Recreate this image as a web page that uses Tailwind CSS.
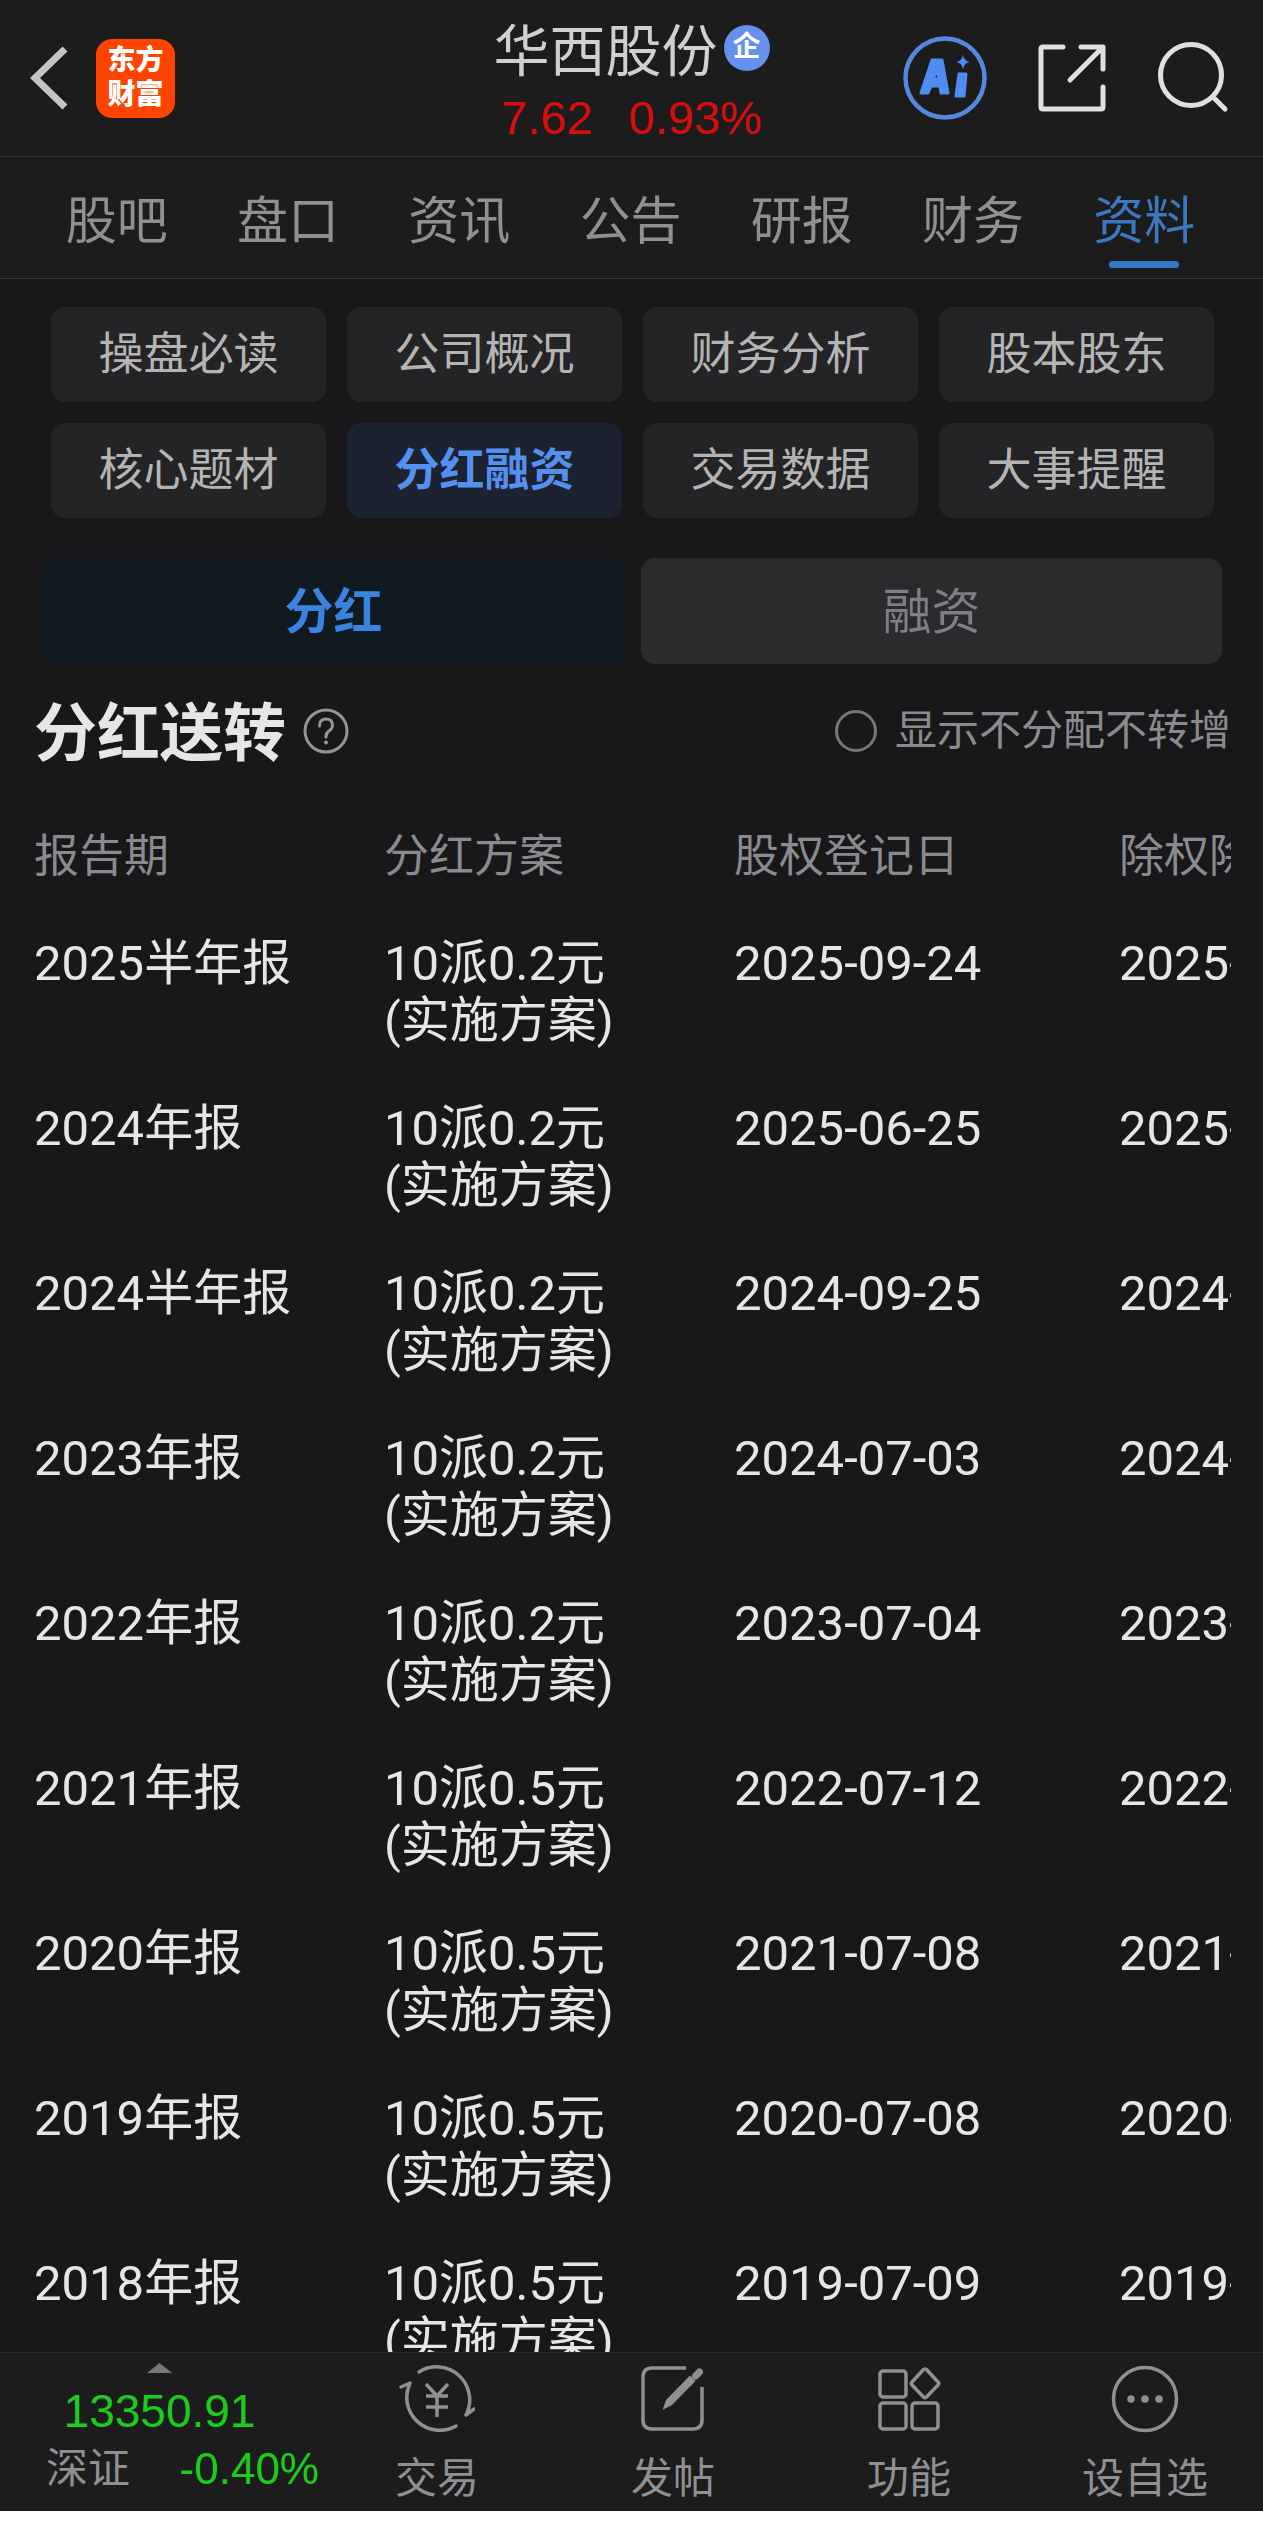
<!DOCTYPE html>
<html lang="zh-CN">

<head>
  <meta charset="UTF-8">
  <meta name="viewport" content="width=device-width, initial-scale=1.0">
  <title>华西股份 - 分红融资</title>
  <script src="https://cdn.jsdelivr.net/npm/@tailwindcss/browser@4"></script>
</head>

<body class="bg-white h-screen flex flex-col pb-[15px] font-[Roboto,'Noto_Sans_CJK_SC',sans-serif]">
  <!-- Header -->
  <header class="shrink-0 h-[157px] grid grid-cols-[1fr_auto_1fr] items-center bg-[#1c1c1c] border-b border-[#333335]">
    <div class="flex items-center pl-[30px] gap-7">
      <button type="button" aria-label="返回">
        <svg class="w-[38px] h-[64px]" viewBox="0 0 38 64" fill="none" stroke="#c4c4c4" stroke-width="7">
          <path d="M35 3 L5 32 L35 61" />
        </svg>
      </button>
      <a href="#" class="w-[79px] h-[79px] rounded-[16px] bg-[#ff4400] flex items-center justify-center text-center text-white text-[28px] leading-[34px] font-black">东方<br>财富</a>
    </div>

    <div class="flex flex-col items-center pt-3">
      <div class="flex items-center gap-[6px]">
        <h1 class="text-[56px] leading-[68px] text-[#d0d0d0]">华西股份</h1>
        <span class="w-[46px] h-[46px] mb-2 rounded-full bg-[#6590ee] text-white text-[28px] leading-[44px] font-bold text-center">企</span>
      </div>
      <p class="flex gap-[36px] font-['Liberation_Sans',sans-serif] text-[47px] leading-[64px] text-[#d80e0e]">
        <span>7.62</span>
        <span>0.93%</span>
      </p>
    </div>

    <div class="flex items-center justify-end pr-[34px] gap-[50px]">
      <button type="button" aria-label="AI">
        <svg class="w-[84px] h-[84px]" viewBox="0 0 84 84">
          <circle cx="42" cy="42" r="39.500" fill="none" stroke="#5688de" stroke-width="4.500" />
          <path fill="#4f8df0" stroke="#4f8df0" stroke-width="3" stroke-linejoin="round" fill-rule="evenodd" d="M29 24h10l6 33h-7l-1-7h-9l-3 7h-7zM34 34l-4 9h6z" />
          <path fill="#4f8df0" stroke="#4f8df0" stroke-width="3" stroke-linejoin="round" d="M56 38h7l-2 22h-8z" />
          <path fill="#4f8df0" d="M60 19q1 6 7 7q-6 1-7 7q-1-6-7-7q6-1 7-7z" />
        </svg>
      </button>
      <button type="button" aria-label="分享">
        <svg class="w-[70px] h-[70px]" viewBox="0 0 70 70" fill="none" stroke="#e0e0e0" stroke-width="5" stroke-linecap="round" stroke-linejoin="round">
          <path d="M26 4H6q-2 0-2 2V64q0 2 2 2H64q2 0 2-2V44" />
          <path d="M44 4H66V26M65 5L33 37" />
        </svg>
      </button>
      <button type="button" aria-label="搜索">
        <svg class="w-[72px] h-[72px]" viewBox="0 0 72 72" fill="none" stroke="#e0e0e0" stroke-width="5" stroke-linecap="round">
          <circle cx="34" cy="33" r="30.500" />
          <path d="M56 55L68 67" />
        </svg>
      </button>
    </div>
  </header>

  <!-- Tabs -->
  <nav class="shrink-0 h-[122px] pl-[31px] pr-[33px] grid grid-cols-7 bg-[#1c1c1c] border-b border-[#333335] text-[51px] leading-[60px] text-center text-[#8f8f94]">
    <a href="#" class="pt-[35px]">股吧</a>
    <a href="#" class="pt-[35px]">盘口</a>
    <a href="#" class="pt-[35px]">资讯</a>
    <a href="#" class="pt-[35px]">公告</a>
    <a href="#" class="pt-[35px]">研报</a>
    <a href="#" class="pt-[35px]">财务</a>
    <a href="#" class="pt-[35px] flex flex-col items-center gap-[9px] text-[#3a78c0]" aria-current="page">
      资料
      <span class="w-[70px] h-[7px] rounded-full bg-[#3478c4]"></span>
    </a>
  </nav>

  <main class="flex-1 min-h-0 overflow-hidden bg-[#18181a]">
    <!-- Sections -->
    <div class="grid grid-cols-4 gap-[21px] pt-7 pl-[51px] pr-[49px] text-[45px] leading-[60px] text-[#b4b4b4]">
      <button type="button" class="h-[95px] rounded-[14px] bg-[#242426]">操盘必读</button>
      <button type="button" class="h-[95px] rounded-[14px] bg-[#242426]">公司概况</button>
      <button type="button" class="h-[95px] rounded-[14px] bg-[#242426]">财务分析</button>
      <button type="button" class="h-[95px] rounded-[14px] bg-[#242426]">股本股东</button>
      <button type="button" class="h-[95px] rounded-[14px] bg-[#242426]">核心题材</button>
      <button type="button" class="h-[95px] rounded-[14px] bg-[#1c2230] text-[#5590f0] font-bold">分红融资</button>
      <button type="button" class="h-[95px] rounded-[14px] bg-[#242426]">交易数据</button>
      <button type="button" class="h-[95px] rounded-[14px] bg-[#242426]">大事提醒</button>
    </div>

    <div class="grid grid-cols-2 gap-[17px] pt-10 pl-[43px] pr-[41px] text-[49px] leading-[60px]">
      <button type="button" class="h-[106px] pt-1 rounded-[14px] bg-[#111921] text-[#3a84e0] font-bold">分红</button>
      <button type="button" class="h-[106px] pt-1 rounded-[14px] bg-[#2b2b2d] text-[#7e7e86]">融资</button>
    </div>

    <!-- Title row -->
    <div class="flex items-center justify-between h-[134px] pl-[34px] pr-8">
      <div class="flex items-center gap-[17px]">
        <h2 class="pt-[6px] text-[63px] leading-[76px] font-bold text-[#e6e6e6]">分红送转</h2>
        <button type="button" aria-label="说明">
          <svg class="w-[46px] h-[46px]" viewBox="0 0 46 46" fill="none" stroke="#949494" stroke-width="3" stroke-linecap="round">
            <circle cx="23" cy="23" r="21" />
            <path d="M16.500 18q0-7 6.500-7t6.500 6.500q0 3-3.500 5.500t-3 6" />
            <circle cx="23" cy="34.500" r="1" fill="#949494" stroke-width="2" />
          </svg>
        </button>
      </div>
      <label class="flex items-center gap-[18px] text-[42px] leading-[56px] text-[#8b8b8f]">
        <input type="radio" name="showAll" class="appearance-none w-[42px] h-[42px] rounded-full border-3 border-[#77777a]">
        显示不分配不转增
      </label>
    </div>

    <!-- Dividend table, scrolls sideways -->
    <div class="ml-[34px] mr-8 overflow-hidden">
      <table class="table-fixed w-[1400px] text-left text-[49px] leading-[57px] text-[#e6e6e6] whitespace-nowrap [&_td]:align-top [&_td]:pt-[25px] [&_td]:pb-[26px]">
        <thead class="text-[45px] text-[#8b8b8f]">
          <tr class="h-[112px]">
            <th class="w-[350px] pt-1 font-normal">报告期</th>
            <th class="w-[350px] pt-1 font-normal">分红方案</th>
            <th class="w-[385px] pt-1 font-normal">股权登记日</th>
            <th class="pt-1 font-normal">除权除息日</th>
          </tr>
        </thead>
        <tbody>
          <tr>
            <td>2025半年报</td>
            <td>10派0.2元<br>(实施方案)</td>
            <td>2025-09-24</td>
            <td>2025-</td>
          </tr>
          <tr>
            <td>2024年报</td>
            <td>10派0.2元<br>(实施方案)</td>
            <td>2025-06-25</td>
            <td>2025-</td>
          </tr>
          <tr>
            <td>2024半年报</td>
            <td>10派0.2元<br>(实施方案)</td>
            <td>2024-09-25</td>
            <td>2024-</td>
          </tr>
          <tr>
            <td>2023年报</td>
            <td>10派0.2元<br>(实施方案)</td>
            <td>2024-07-03</td>
            <td>2024-</td>
          </tr>
          <tr>
            <td>2022年报</td>
            <td>10派0.2元<br>(实施方案)</td>
            <td>2023-07-04</td>
            <td>2023-</td>
          </tr>
          <tr>
            <td>2021年报</td>
            <td>10派0.5元<br>(实施方案)</td>
            <td>2022-07-12</td>
            <td>2022-</td>
          </tr>
          <tr>
            <td>2020年报</td>
            <td>10派0.5元<br>(实施方案)</td>
            <td>2021-07-08</td>
            <td>2021-</td>
          </tr>
          <tr>
            <td>2019年报</td>
            <td>10派0.5元<br>(实施方案)</td>
            <td>2020-07-08</td>
            <td>2020-</td>
          </tr>
          <tr>
            <td>2018年报</td>
            <td>10派0.5元<br>(实施方案)</td>
            <td>2019-07-09</td>
            <td>2019-</td>
          </tr>
        </tbody>
      </table>
    </div>
  </main>

  <!-- Bottom bar -->
  <footer class="shrink-0 h-[159px] grid grid-cols-[319px_repeat(4,1fr)] bg-[#1c1c1c] border-t border-[#2a2a2c] text-[42px] leading-[56px] text-[#8f8f94]">
    <a href="#" class="flex flex-col items-center pt-[10px]">
      <svg class="w-[25px] h-[10px]" viewBox="0 0 25 10" fill="#77777b">
        <path d="M0 10L12.500 0L25 10z" />
      </svg>
      <span class="mt-2 font-['Liberation_Sans',sans-serif] text-[46px] leading-[60px] text-[#1ccc1c]">13350.91</span>
      <span class="w-full flex justify-between pl-[46px]">
        <span>深证</span>
        <span class="font-['Liberation_Sans',sans-serif] text-[44px] text-[#1ccc1c]">-0.40%</span>
      </span>
    </a>
    <a href="#" class="flex flex-col items-center pt-[10px] gap-4">
      <svg class="w-[76px] h-[72px]" viewBox="0 0 76 72" fill="none" stroke="#8f8f94" stroke-width="3.500" stroke-linecap="round" stroke-linejoin="round">
        <path d="M20 9A33 33 0 0 1 67 52L75 46" />
        <path d="M57 63A33 33 0 0 1 11 20L2 24" />
        <path d="M27 21L38 33L49 21M27 33H49M27 44H49M38 33V54" stroke-linecap="butt" />
      </svg>
      交易
    </a>
    <a href="#" class="flex flex-col items-center pt-[10px] gap-4">
      <svg class="w-[72px] h-[72px]" viewBox="0 0 72 72" fill="none" stroke="#8f8f94" stroke-width="3.500">
        <path d="M49 5H15Q6 5 6 14V57Q6 66 15 66H56Q65 66 65 57V24" />
        <path fill="#8f8f94" stroke="none" d="M53 12.500L58.500 18L35 42L25.500 47L29 37z" />
        <path d="M58.500 13L62.500 9" stroke-width="7" stroke-linecap="round" />
      </svg>
      发帖
    </a>
    <a href="#" class="flex flex-col items-center pt-[10px] gap-4">
      <svg class="w-[72px] h-[72px]" viewBox="0 0 72 72" fill="none" stroke="#8f8f94" stroke-width="3.500" stroke-linejoin="round">
        <rect x="7" y="8" width="26" height="26" rx="3" />
        <rect x="7" y="40" width="26" height="26" rx="3" />
        <rect x="39" y="40" width="26" height="26" rx="3" />
        <path d="M50.500 6.500q1.500-1 3 0L65 19q1.500 1.500 0 3L53.500 34q-1.500 1.500-3 0L39 22q-1.500-1.500 0-3z" />
      </svg>
      功能
    </a>
    <a href="#" class="flex flex-col items-center pt-[10px] gap-4">
      <svg class="w-[72px] h-[72px]" viewBox="0 0 72 72">
        <circle cx="36" cy="36" r="31.500" fill="none" stroke="#8f8f94" stroke-width="3.500" />
        <g fill="#8f8f94">
          <circle cx="22" cy="36" r="3.800" />
          <circle cx="36" cy="36" r="3.800" />
          <circle cx="50" cy="36" r="3.800" />
        </g>
      </svg>
      设自选
    </a>
  </footer>
</body>

</html>
